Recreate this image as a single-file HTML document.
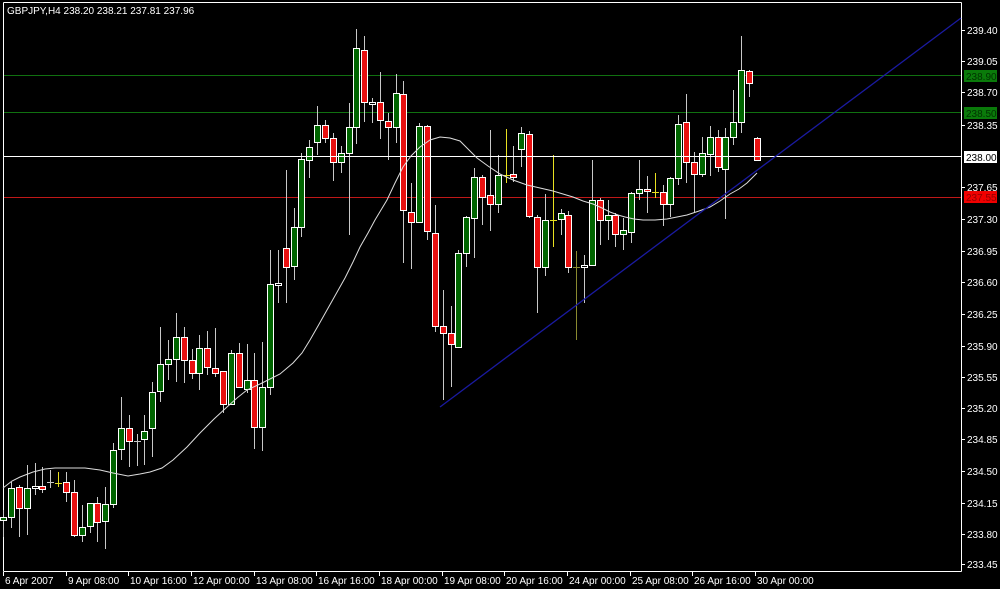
<!DOCTYPE html>
<html><head><meta charset="utf-8">
<style>
html,body{margin:0;padding:0;background:#000;width:1000px;height:589px;overflow:hidden}
svg{display:block}
text{font-family:"Liberation Sans","DejaVu Sans",sans-serif;font-size:10px}
line,rect{shape-rendering:crispEdges}
</style></head>
<body>
<svg id="c" width="1000" height="589" xmlns="http://www.w3.org/2000/svg">
<rect x="0" y="0" width="1000" height="589" fill="#000"/>
<line x1="3.5" y1="2.5" x2="961.5" y2="2.5" stroke="#fff"/>
<line x1="3.5" y1="2.5" x2="3.5" y2="571.5" stroke="#fff"/>
<line x1="961.5" y1="2.5" x2="961.5" y2="571.5" stroke="#fff"/>
<line x1="3.5" y1="571.5" x2="961.5" y2="571.5" stroke="#fff"/>
<line x1="4" y1="75.5" x2="961" y2="75.5" stroke="#107010"/>
<line x1="4" y1="112.5" x2="961" y2="112.5" stroke="#107010"/>
<line x1="4" y1="197.5" x2="961" y2="197.5" stroke="#c01818"/>
<g id="candles"></g>
<line x1="4" y1="156.5" x2="961" y2="156.5" stroke="#fff"/>
<polyline fill="none" stroke="#ddd" stroke-width="1" points="3,488 12,481 20,477 33,472 45,469 55,468 70,468 85,468 100,470 113,473 128,476 140,474 150,472 162,468 173,460 187,447 200,433 214,419 227,407 237,398 247,390 260,384 270,379 280,374 293,363 302,353 310,340 318,326 327,310 336,294 345,278 353,262 360,247 368,233 375,220 381,210 387,200 395,183 403,167 411,156 420,147 430,140 440,137 450,138 460,141 468,149 477,158 488,166 500,174 513,180 527,185 540,188 553,191 563,194 573,197 583,201 593,204 602,208 610,212 618,215 625,217 634,219 643,220 655,220 667,219 677,217 687,215 699,211 710,207 720,201 730,194 739,189 747,183 752,178 757,173"/>
<line x1="440" y1="407" x2="961" y2="18" stroke="#1a1aa0" stroke-width="1.3" style="shape-rendering:auto"/>
<text x="7" y="14" fill="#fff">GBPJPY,H4  238.20 238.21 237.81 237.96</text>
<g id="axis"></g>
</svg>
<script>
var d=[
[0,510,537,520,517,'g'],[1,482,528,517,488,'g'],[2,485,537,487,508,'r'],[3,465,535,508,488,'g'],
[4,463,495,488,486,'w'],[5,467,493,486,489,'r'],[6,470,488,482,482,'c'],[7,472,487,483,483,'y'],
[8,472,502,482,492,'r'],[9,480,537,492,535,'r'],[10,505,542,535,527,'g'],[11,503,533,526,503,'g'],
[12,497,542,503,522,'r'],[13,487,549,521,504,'g'],[14,443,508,504,450,'g'],[15,397,460,449,428,'g'],
[16,415,467,428,441,'r'],[17,434,466,441,441,'c'],[18,415,465,439,431,'g'],[19,382,457,428,392,'g'],
[20,327,402,391,364,'g'],[21,340,380,364,359,'g'],[22,313,382,359,337,'g'],[23,327,383,337,360,'r'],
[24,349,379,360,373,'r'],[25,335,390,373,348,'g'],[26,331,375,348,367,'r'],[27,328,377,368,373,'r'],
[28,371,413,371,404,'r'],[29,350,405,404,353,'g'],[30,343,388,353,387,'r'],[31,344,393,389,380,'g'],
[32,353,449,380,427,'r'],[33,342,451,427,387,'g'],[34,250,395,387,284,'g'],[35,250,303,285,283,'w'],
[36,170,303,248,267,'r'],[37,208,280,266,227,'g'],[38,153,237,227,159,'g'],[39,140,178,160,147,'g'],
[40,106,155,142,125,'g'],[41,120,143,125,138,'r'],[42,133,181,138,162,'r'],[43,146,173,162,153,'g'],
[44,103,235,153,127,'g'],[45,29,144,127,48,'g'],[46,36,122,50,102,'r'],[47,98,123,104,102,'w'],
[48,72,139,102,120,'r'],[49,113,160,121,127,'r'],[50,74,143,127,93,'g'],[51,81,263,94,210,'r'],
[52,183,269,212,222,'r'],[53,123,223,222,126,'g'],[54,125,240,126,231,'r'],[55,205,332,233,326,'r'],
[56,290,400,326,333,'r'],[57,306,387,333,344,'r'],[58,250,348,347,253,'g'],[59,216,267,253,217,'g'],
[60,168,258,218,177,'g'],[61,175,225,177,197,'r'],[62,130,231,195,204,'r'],[63,155,213,204,175,'g'],
[64,129,183,175,175,'y'],[65,146,182,174,177,'r'],[66,127,167,149,133,'g'],[67,131,218,134,216,'r'],
[68,215,313,217,267,'r'],[69,194,276,267,220,'g'],[70,155,247,220,220,'y'],[71,209,235,219,213,'g'],
[72,211,273,215,267,'r'],[73,251,340,267,267,'o'],[74,255,303,267,265,'w'],[75,160,265,265,200,'g'],
[76,198,245,200,220,'r'],[77,200,240,220,215,'g'],[78,213,247,215,234,'r'],[79,218,250,234,230,'g'],
[80,192,243,232,193,'g'],[81,160,200,193,189,'g'],[82,176,213,189,191,'r'],[83,173,198,192,192,'y'],
[84,185,226,192,204,'r'],[85,177,217,204,178,'g'],[86,115,185,178,124,'g'],[87,94,183,122,162,'r'],
[88,152,213,162,174,'r'],[89,137,177,174,153,'g'],[90,126,176,154,137,'g'],[91,130,172,137,167,'r'],
[92,128,219,169,137,'g'],[93,90,145,137,122,'g'],[94,36,133,122,70,'g'],[95,70,97,71,83,'r'],
[96,137,161,138,160,'r']];
var s='';
d.forEach(function(a){
 var x=Math.round(3.15+7.85*a[0])+0.5,h=a[1],l=a[2],o=a[3],c=a[4],t=a[5];
 var top=Math.min(o,c),bot=Math.max(o,c);
 var wc='#c8c8c8';
 if(t=='y')wc='#e8e020'; if(t=='o')wc='#8a8a30';
 s+='<line x1="'+x+'" y1="'+h+'" x2="'+x+'" y2="'+l+'" stroke="'+wc+'"/>';
 if(t=='c'||t=='y'||t=='o'){
  s+='<line x1="'+(x-3.5)+'" y1="'+(o+.5)+'" x2="'+(x+3.5)+'" y2="'+(o+.5)+'" stroke="'+wc+'"/>';
 } else {
  var f=t=='g'?'#006400':(t=='r'?'#e81010':'#000');
  var hh=Math.max(bot-top,2);
  s+='<rect x="'+(x-3)+'" y="'+(top+.5)+'" width="6" height="'+hh+'" fill="'+f+'" stroke="#fff"/>';
 }
});
document.getElementById('candles').innerHTML=s;
var ax='';
var lab=[['239.40',30],['239.05',61],['238.70',92],['238.35',125],['237.65',187],['237.30',219],['236.95',251],['236.60',282],['236.25',314],['235.90',346],['235.55',377],['235.20',408],['234.85',439],['234.50',471],['234.15',503],['233.80',534],['233.45',564]];
lab.forEach(function(l){ax+='<line x1="962" y1="'+(l[1]+.5)+'" x2="965" y2="'+(l[1]+.5)+'" stroke="#fff"/><text x="967" y="'+(l[1]+4)+'" fill="#fff">'+l[0]+'</text>';});
ax+='<rect x="964" y="70" width="33" height="12" fill="#0a7a0a"/><text x="966" y="80" fill="#003300">238.90</text>';
ax+='<rect x="964" y="107" width="33" height="12" fill="#0a7a0a"/><text x="966" y="117" fill="#003300">238.50</text>';
ax+='<rect x="964" y="151" width="33" height="12" fill="#fff"/><text x="966" y="161" fill="#000">238.00</text>';
ax+='<rect x="964" y="191" width="33" height="12" fill="#f00000"/><text x="966" y="201" fill="#900000">237.55</text>';
var dl=[['6 Apr 2007',3],['9 Apr 08:00',66],['10 Apr 16:00',128],['12 Apr 00:00',191],['13 Apr 08:00',254],['16 Apr 16:00',316],['18 Apr 00:00',379],['19 Apr 08:00',442],['20 Apr 16:00',504],['24 Apr 00:00',567],['25 Apr 08:00',630],['26 Apr 16:00',692],['30 Apr 00:00',755]];
dl.forEach(function(l){ax+='<line x1="'+(l[1]+.5)+'" y1="572" x2="'+(l[1]+.5)+'" y2="576" stroke="#fff"/><text x="'+(l[1]+2)+'" y="584" fill="#fff">'+l[0]+'</text>';});
document.getElementById('axis').innerHTML=ax;
</script>
</body></html>
